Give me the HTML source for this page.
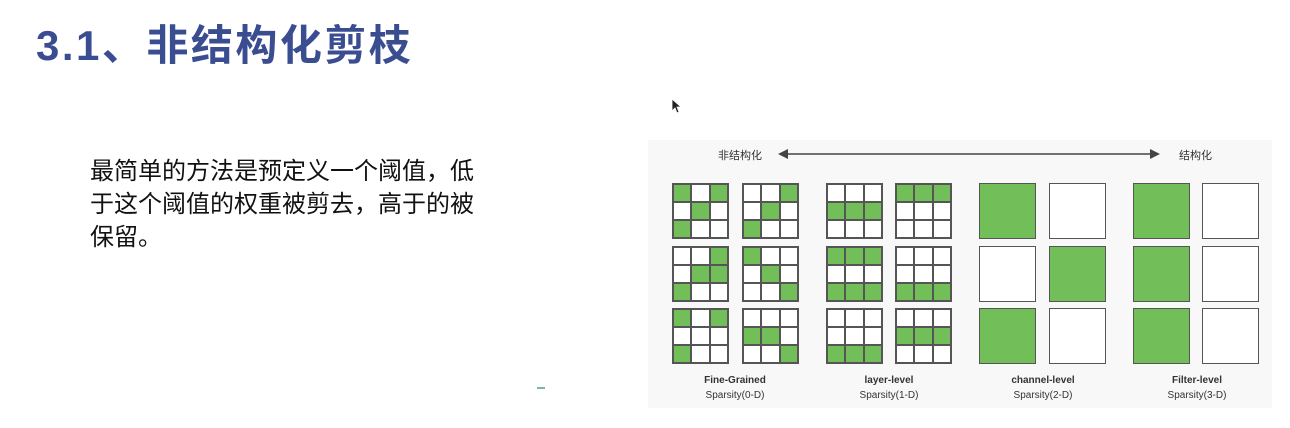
<!DOCTYPE html>
<html><head><meta charset="utf-8"><style>
html,body{margin:0;padding:0;background:#fff;width:1290px;height:428px;overflow:hidden;position:relative;font-family:"Liberation Sans","Noto Sans CJK SC",sans-serif}
.title{position:absolute;left:36px;top:12px;font-size:42px;font-weight:bold;color:#3b4d91;letter-spacing:2.5px;white-space:nowrap}
.body{position:absolute;left:90px;top:155px;width:395px;font-size:24px;line-height:33px;color:#111}
.panel{position:absolute;left:648px;top:140px;width:624px;height:268px;background:#f8f8f8}
.g{position:absolute;display:grid;grid-template-columns:repeat(3,1fr);grid-template-rows:repeat(3,1fr);width:55px;height:54px;border:1px solid #555;gap:0}
.g div{border:0.5px solid #555;background:#fff}
.g div.f{background:#72bf5a}
.b{position:absolute;width:55px;height:54px;border:1px solid #555;background:#fff}
.b.f{background:#72bf5a}
.lbl{position:absolute;font-size:10px;color:#333;text-align:center;width:120px;line-height:15px}
.cn{position:absolute;font-size:11px;color:#333}
</style></head><body>
<div class="title">3.1、非结构化剪枝</div>
<div class="body">最简单的方法是预定义一个阈值，低于这个阈值的权重被剪去，高于的被保留。</div>
<svg style="position:absolute;left:671px;top:98px" width="10" height="16"><path d="M1 1 L1 13 L4 10 L6 15 L8 14 L6 9 L10 9 Z" fill="#222" stroke="#fff" stroke-width="0.8"/></svg>
<div class="panel"></div>
<div class="cn" style="left:718px;top:147px">非结构化</div>
<div class="cn" style="left:1179px;top:147px">结构化</div>
<svg style="position:absolute;left:778px;top:148px" width="382" height="12"><line x1="6" y1="6" x2="376" y2="6" stroke="#444" stroke-width="1.5"/><path d="M0 6 L10 1 L10 11Z" fill="#444"/><path d="M382 6 L372 1 L372 11Z" fill="#444"/></svg>
<div id="grids"></div>
<script>
var P=[
[672,183,"101010100"],[742,183,"001010100"],
[672,246,"001011100"],[742,246,"100010001"],
[672,308,"101000100"],[742,308,"000110001"],
[826,183,"000111000"],[895,183,"111000000"],
[826,246,"111000111"],[895,246,"000000111"],
[826,308,"000000111"],[895,308,"000111000"]];
var h="";
P.forEach(function(p){h+='<div class="g" style="left:'+p[0]+'px;top:'+p[1]+'px">';for(var i=0;i<9;i++)h+='<div'+(p[2][i]=="1"?' class="f"':'')+'></div>';h+='</div>';});
var B=[[979,183,1],[1049,183,0],[979,246,0],[1049,246,1],[979,308,1],[1049,308,0],
[1133,183,1],[1202,183,0],[1133,246,1],[1202,246,0],[1133,308,1],[1202,308,0]];
B.forEach(function(b){h+='<div class="b'+(b[2]?' f':'')+'" style="left:'+b[0]+'px;top:'+b[1]+'px"></div>';});
document.getElementById("grids").innerHTML=h;
</script>
<div class="lbl" style="left:675px;top:373px"><b>Fine-Grained</b><br>Sparsity(0-D)</div>
<div class="lbl" style="left:829px;top:373px"><b>layer-level</b><br>Sparsity(1-D)</div>
<div class="lbl" style="left:983px;top:373px"><b>channel-level</b><br>Sparsity(2-D)</div>
<div class="lbl" style="left:1137px;top:373px"><b>Filter-level</b><br>Sparsity(3-D)</div>
<div style="position:absolute;left:537px;top:387px;width:8px;height:2px;background:#7ab8a0"></div>
</body></html>
